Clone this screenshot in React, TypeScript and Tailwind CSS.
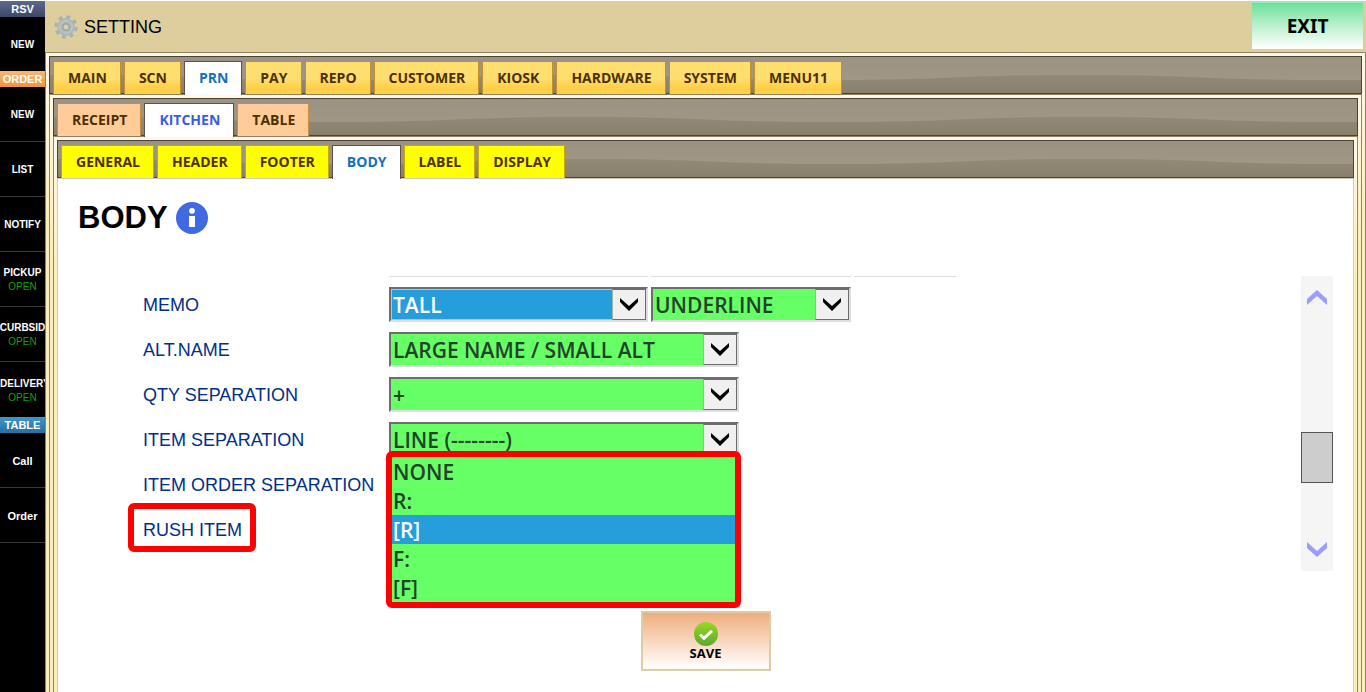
import clsx from "clsx";
import type { ReactNode } from "react";

type Tone = "gold" | "peach" | "yellow";

const sidebar = [
  { title: "RSV", tone: "bg-linear-to-b from-[#5d6a8c] to-[#3c4767]", items: [{ name: "NEW" }] },
  {
    title: "ORDER",
    tone: "bg-linear-to-b from-[#fbb676] to-[#ee9438]",
    items: [
      { name: "NEW" },
      { name: "LIST" },
      { name: "NOTIFY" },
      { name: "PICKUP", status: "OPEN" },
      { name: "CURBSID", status: "OPEN" },
      { name: "DELIVERY", status: "OPEN" },
    ],
  },
  {
    title: "TABLE",
    tone: "bg-linear-to-b from-[#3f97c9] to-[#256f9f]",
    items: [{ name: "Call" }, { name: "Order" }],
  },
] as { title: string; tone: string; items: { name: string; status?: string }[] }[];

const mainTabs = ["MAIN", "SCN", "PRN", "PAY", "REPO", "CUSTOMER", "KIOSK", "HARDWARE", "SYSTEM", "MENU11"];
const printerTabs = ["RECEIPT", "KITCHEN", "TABLE"];
const kitchenTabs = ["GENERAL", "HEADER", "FOOTER", "BODY", "LABEL", "DISPLAY"];
const rushOptions = ["NONE", "R:", "[R]", "F:", "[F]"];

const tabTones: Record<Tone, string> = {
  gold: "bg-linear-to-b from-[#ffde70] from-50% to-[#ffd047] to-80% border-[#c3912b] text-[#4c3000]",
  peach: "bg-[#ffcc99] border-[#c98f3c] text-[#4c3000]",
  yellow: "bg-[#ffff00] border-[#c9a800] text-[#4c3000]",
};

function Wave({ id }: { id: string }) {
  return (
    <svg className="absolute inset-0 size-full" aria-hidden="true">
      <defs>
        <linearGradient id={`${id}-shade`} x1="0" y1="0" x2="0" y2="1">
          <stop offset="0" stopColor="#928976" />
          <stop offset="1" stopColor="#867e6b" />
        </linearGradient>
        <pattern id={id} width="500" height="40" patternUnits="userSpaceOnUse" patternTransform="translate(278 0)">
          <path d="M0 23C125 23 125 18 250 18S375 23 500 23V40H0Z" fill={`url(#${id}-shade)`} />
        </pattern>
      </defs>
      <rect width="100%" height="100%" fill={`url(#${id})`} />
    </svg>
  );
}

function TabPanel({
  id,
  tabs,
  active,
  tone,
  activeText,
  children,
}: {
  id: string;
  tabs: string[];
  active: string;
  tone: Tone;
  activeText: string;
  children: ReactNode;
}) {
  return (
    <section className="flex flex-1 flex-col border-x border-t border-[#94835f] bg-linear-to-b from-[#fff8e6] to-[#fbeebd] to-25% px-[3px] pt-[3px]">
      <div className="relative h-[38px] border border-[#4a4238] bg-linear-to-b from-[#9c9282] to-[#a29989]">
        <Wave id={id} />
        <div role="tablist" className="relative flex gap-[3px] pt-1 pl-[3px]">
          {tabs.map((tab) => (
            <button
              key={tab}
              type="button"
              role="tab"
              aria-selected={tab === active}
              className={clsx(
                "border border-b-0 pr-[13px] pl-3.5 text-[14px] leading-5 font-bold whitespace-nowrap",
                tab === active
                  ? clsx("h-[34px] border-[#5c5346] bg-white pb-0.5", activeText)
                  : clsx("h-[33px] pb-px", tabTones[tone]),
              )}
            >
              {tab}
            </button>
          ))}
        </div>
      </div>
      {children}
    </section>
  );
}

function Dropdown({ id, value, width, focused }: { id: string; value: string; width: string; focused?: boolean }) {
  return (
    <div
      className={clsx(
        "relative h-[35px] border-2 border-t-[#6d6d6d] border-r-[#dedede] border-b-[#dedede] border-l-[#6d6d6d] bg-[#66ff66] p-px",
        width,
      )}
    >
      <select
        id={id}
        defaultValue={value}
        className={clsx(
          "block size-full appearance-none pl-px text-[21px] leading-7 font-semibold outline-none",
          focused ? "bg-[#269edb] text-white" : "text-[#24422a]",
        )}
      >
        <option>{value}</option>
      </select>
      <span className="pointer-events-none absolute inset-y-0 right-0 flex w-[34px] items-start justify-center border border-[#6d6d6d] border-l-[#9fb59f] bg-[#f0f0f0] pt-2">
        <svg width="20" height="13" viewBox="0 0 20 13" aria-hidden="true">
          <path d="M1 0L10 8L19 0V4L10 13L1 4Z" fill="#000" />
        </svg>
      </span>
    </div>
  );
}

function Row({ id, label, marked, children }: { id: string; label: string; marked?: boolean; children: ReactNode }) {
  return (
    <div className="flex h-[35px] items-center">
      <div className="relative w-[246px] shrink-0 pt-0.5">
        <label id={`${id}-label`} htmlFor={id} className="text-[18px] leading-6 whitespace-nowrap text-[#002f87]">
          {label}
        </label>
        {marked && (
          <span className="pointer-events-none absolute -top-[13px] -left-[15px] h-[49px] w-32 rounded-md border-6 border-[#ff0000]" />
        )}
      </div>
      {children}
    </div>
  );
}

function Gear() {
  return (
    <svg width="24" height="24" viewBox="0 0 24 24" fill="none" aria-hidden="true">
      <circle cx="12" cy="12" r="10" stroke="#a6b1b4" strokeWidth="3.4" strokeDasharray="3.9 3.954" />
      <circle cx="12" cy="12" r="6.5" stroke="#adb8bb" strokeWidth="5" />
      <circle cx="12" cy="12" r="6.2" stroke="#c3cccd" strokeWidth="1" />
      <circle cx="12" cy="12" r="3.2" stroke="#97a4a8" strokeWidth="1.4" />
      <circle cx="12" cy="12" r="1.8" fill="#dccf9f" />
    </svg>
  );
}

export default function App() {
  return (
    <div className="flex min-h-screen border-t border-white bg-white font-['Open_Sans',sans-serif]">
      <nav className="w-[45px] shrink-0 overflow-hidden bg-black font-['Liberation_Sans',Arial,sans-serif] font-bold text-white">
        {sidebar.map((group) => (
          <div key={group.title}>
            <h2 className={clsx("h-4 text-center text-[11px] leading-4", group.tone)}>{group.title}</h2>
            {group.items.map((item, i) => (
              <button
                key={item.name}
                type="button"
                className={clsx(
                  "flex w-full flex-col items-center justify-center border-[#3a3a3a] pt-0.5 leading-[14px]",
                  group.title === "RSV" ? "h-[54px]" : "h-[55px] border-b",
                  group.title === "TABLE" ? "text-[11px]" : "text-[10px]",
                  i === group.items.length - 1 && group.title === "ORDER" && "border-b-0",
                )}
              >
                <span className={clsx(item.name.length > 7 && "w-full text-left")}>{item.name}</span>
                {item.status && <span className="font-normal text-[#12a012]">{item.status}</span>}
              </button>
            ))}
          </div>
        ))}
      </nav>

      <div className="flex min-w-0 flex-1 flex-col">
        <header className="flex h-[51px] items-start justify-between bg-[#dece9d] pr-0.5 pl-[9px]">
          <div className="flex items-center gap-1.5 pt-3.5">
            <Gear />
            <h1 className="font-['Liberation_Sans',Arial,sans-serif] text-[18px] leading-6 text-black">SETTING</h1>
          </div>
          <button
            type="button"
            className="mt-px h-12 w-[113px] border border-[#98e8ba] bg-linear-to-b from-[#6ae09b] to-white pt-px font-['Noto_Sans',sans-serif] text-[19px] font-bold text-black"
          >
            EXIT
          </button>
        </header>

        <TabPanel id="wave-main" tabs={mainTabs} active="PRN" tone="gold" activeText="text-[#1172b9]">
          <TabPanel id="wave-printer" tabs={printerTabs} active="KITCHEN" tone="peach" activeText="text-[#3a5be8]">
            <TabPanel id="wave-kitchen" tabs={kitchenTabs} active="BODY" tone="yellow" activeText="text-[#1172b9]">
              <main className="flex flex-1 flex-col border-x border-t border-[#d2cbb8] bg-white px-5 pt-[23px]">
                <div className="flex items-center gap-2">
                  <h2 className="font-['Liberation_Sans',Arial,sans-serif] text-[31px] leading-8 font-bold text-black">
                    BODY
                  </h2>
                  <svg width="32" height="32" viewBox="0 0 32 32" role="img" aria-label="Info">
                    <circle cx="16" cy="16" r="16" fill="#4169e1" />
                    <circle cx="16" cy="8.8" r="2.9" fill="#fff" />
                    <path d="M13 14h6v11h-6z" fill="#fff" />
                  </svg>
                </div>

                <div className="mt-[42px] flex justify-between">
                  <form className="pl-[65px] font-['Liberation_Sans',Arial,sans-serif]">
                    {/* bottom edge of the row scrolled out above */}
                    <div className="flex gap-[3px] pl-[246px]">
                      <div className="h-px w-[259px] bg-[#dedede]" />
                      <div className="h-px w-[200px] bg-[#dedede]" />
                      <div className="h-px w-[102px] bg-[#dedede]" />
                    </div>
                    <div className="mt-2.5 flex flex-col gap-2.5">
                      <Row id="memo" label="MEMO">
                        <div className="flex gap-[3px] font-['Open_Sans',sans-serif]">
                          <Dropdown id="memo" value="TALL" width="w-[259px]" focused />
                          <Dropdown id="memo-style" value="UNDERLINE" width="w-[200px]" />
                        </div>
                      </Row>
                      <Row id="alt-name" label="ALT.NAME">
                        <div className="font-['Open_Sans',sans-serif]">
                          <Dropdown id="alt-name" value="LARGE NAME / SMALL ALT" width="w-[350px]" />
                        </div>
                      </Row>
                      <Row id="qty" label="QTY SEPARATION">
                        <div className="font-['Open_Sans',sans-serif]">
                          <Dropdown id="qty" value="+" width="w-[350px]" />
                        </div>
                      </Row>
                      <Row id="item" label="ITEM SEPARATION">
                        <div className="font-['Open_Sans',sans-serif]">
                          <Dropdown id="item" value="LINE (--------)" width="w-[350px]" />
                        </div>
                      </Row>
                      <Row id="item-order" label="ITEM ORDER SEPARATION">
                        <Dropdown id="item-order" value="" width="w-[350px]" />
                      </Row>
                      <Row id="rush" label="RUSH ITEM" marked>
                        <div className="relative h-[35px] w-[350px]">
                          <ul
                            id="rush"
                            role="listbox"
                            aria-labelledby="rush-label"
                            className="absolute -top-[61px] -left-[3px] w-[355px] rounded-md border-6 border-[#ff0000] bg-[#66ff66] font-['Open_Sans',sans-serif] text-[21px] leading-[31px] font-semibold text-[#24422a]"
                          >
                            {rushOptions.map((option) => (
                              <li
                                key={option}
                                role="option"
                                aria-selected={option === "[R]"}
                                className={clsx("h-[29px] px-px", option === "[R]" && "bg-[#269edb] text-white")}
                              >
                                {option}
                              </li>
                            ))}
                          </ul>
                        </div>
                      </Row>
                    </div>
                  </form>

                  <div className="flex h-[295px] w-8 shrink-0 flex-col items-center bg-[#f5f5f5]">
                    <button type="button" aria-label="Scroll up" className="pt-3.5">
                      <svg width="20" height="15" viewBox="0 0 20 15" fill="#9c9cff" aria-hidden="true">
                        <path d="M10 0L20 9V15L10 6L0 15V9Z" />
                      </svg>
                    </button>
                    <div className="mt-[127px] h-[51px] w-full border border-[#555] bg-[#cdcdcd]" />
                    <button type="button" aria-label="Scroll down" className="mt-auto pb-3.5">
                      <svg width="20" height="15" viewBox="0 0 20 15" fill="#9c9cff" aria-hidden="true">
                        <path d="M10 15L20 6V0L10 9L0 0V6Z" />
                      </svg>
                    </button>
                  </div>
                </div>

                <button
                  type="button"
                  className="mt-10 flex h-[60px] w-[130px] flex-col items-center self-center border-2 border-[#dccda4] bg-linear-to-b from-[#eead7e] to-white pt-[9px] text-[13px] leading-[14px] font-bold text-black"
                >
                  <svg width="24" height="24" viewBox="0 0 24 24" aria-hidden="true">
                    <defs>
                      <linearGradient id="save-green" x1="0" y1="0" x2="0" y2="1">
                        <stop offset="0" stopColor="#9bd81f" />
                        <stop offset="1" stopColor="#5aa92c" />
                      </linearGradient>
                    </defs>
                    <circle cx="12" cy="12" r="12" fill="url(#save-green)" />
                    <path d="M6 12.5l4 3.8L18 8.8" fill="none" stroke="#fff" strokeWidth="3" />
                  </svg>
                  SAVE
                </button>
              </main>
            </TabPanel>
          </TabPanel>
        </TabPanel>
      </div>
    </div>
  );
}
